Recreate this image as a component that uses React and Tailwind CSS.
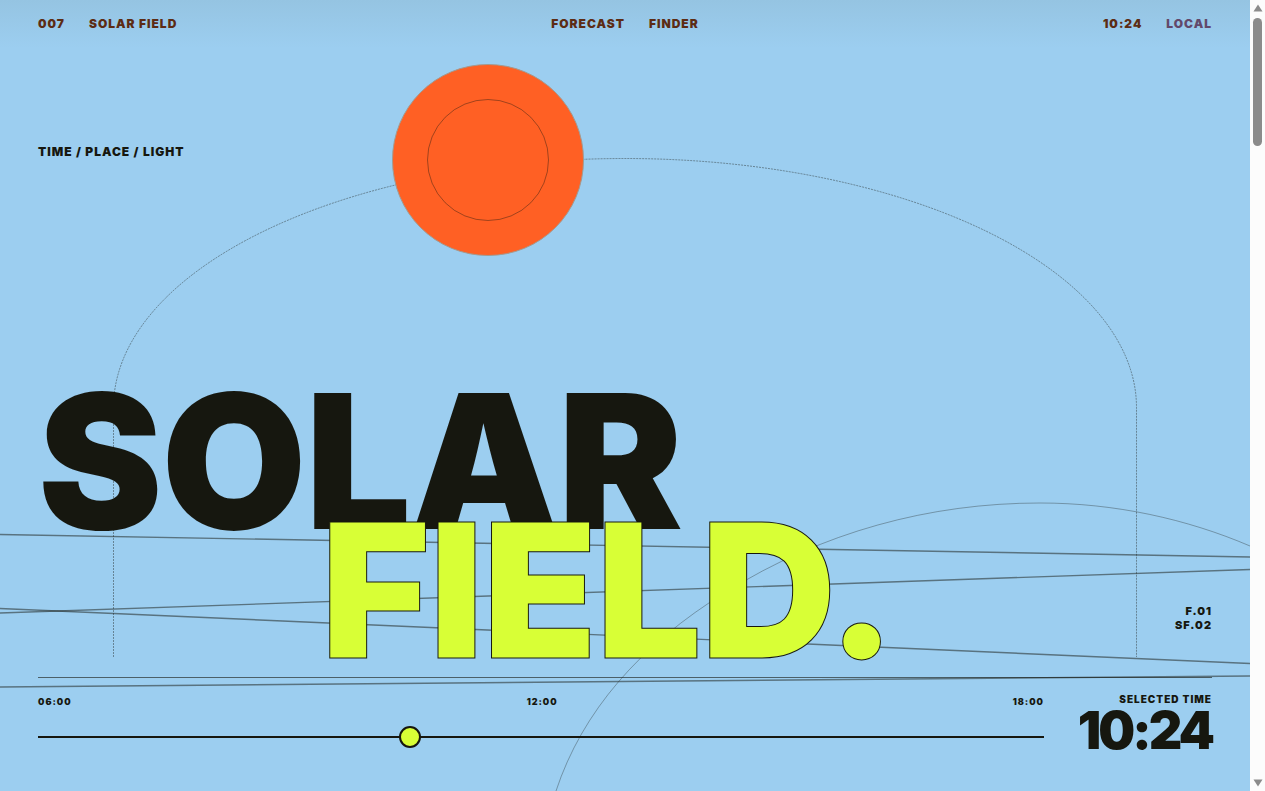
import React, { useState } from 'react';

const HOUR_MARKS = ['06:00', '12:00', '18:00'];

const formatTime = (minutes) => {
  const hours = String(Math.floor(minutes / 60)).padStart(2, '0');
  const rest = String(minutes % 60).padStart(2, '0');
  return `${hours}:${rest}`;
};

function FieldLines() {
  return (
    <svg
      className="absolute inset-0 -z-10 h-full w-full"
      viewBox="0 0 1250 791"
      preserveAspectRatio="none"
      fill="none"
      stroke="#16170f"
      aria-hidden="true"
    >
      {/* day arc */}
      <path
        d="M113.5 657V407.5A511.5 249 0 0 1 1136.5 407.5V657"
        strokeOpacity="0.4"
        strokeDasharray="2 1"
      />
      {/* far hill */}
      <path
        d="M556 791C582 712 640 645 726 592C822 532 930 503 1040 503C1115 503 1187 519 1250 546"
        strokeOpacity="0.32"
      />
      {/* furrows */}
      <g strokeOpacity="0.5" strokeWidth="1.4">
        <path d="M0 534.5L1250 557" />
        <path d="M0 613L1250 569.5" />
        <path d="M0 608.5L1250 663.5" />
        <path d="M0 687L1250 676" />
      </g>
      {/* sun */}
      <circle cx="488" cy="160" r="95.5" fill="#ff6024" stroke="#a39a90" />
      <circle cx="488" cy="160" r="60.5" strokeOpacity="0.4" />
    </svg>
  );
}

function Header({ time }) {
  return (
    <header className="grid h-12 grid-cols-3 items-center bg-linear-to-b from-[#95c4e2] to-[#9ccef0] px-[38px] text-[12px] text-[#5c2c14]">
      <div className="flex gap-6">
        <span>007</span>
        <a href="#top">SOLAR FIELD</a>
      </div>
      <nav className="flex justify-center gap-6">
        <a href="#forecast">FORECAST</a>
        <a href="#finder">FINDER</a>
      </nav>
      <div className="flex justify-end gap-6">
        <span>{time}</span>
        <span className="text-[#62486a]">LOCAL</span>
      </div>
    </header>
  );
}

function TimeControl({ minutes, onChange }) {
  return (
    <div className="mx-[38px] mt-[22px] flex h-[114px] gap-8 border-t border-[#16170f]/60">
      <div className="flex-1 pt-4">
        <div className="flex justify-between text-[9px] leading-4">
          {HOUR_MARKS.map((mark) => (
            <span key={mark}>{mark}</span>
          ))}
        </div>
        <input
          type="range"
          min="360"
          max="1080"
          value={minutes}
          onChange={(e) => onChange(Number(e.target.value))}
          aria-label="Time of day"
          className="mt-4 block h-[22px] w-full cursor-pointer appearance-none bg-transparent [&::-webkit-slider-runnable-track]:h-[2px] [&::-webkit-slider-runnable-track]:bg-[#16170f] [&::-webkit-slider-thumb]:-mt-[10px] [&::-webkit-slider-thumb]:size-[22px] [&::-webkit-slider-thumb]:appearance-none [&::-webkit-slider-thumb]:rounded-full [&::-webkit-slider-thumb]:border-2 [&::-webkit-slider-thumb]:border-solid [&::-webkit-slider-thumb]:border-[#16170f] [&::-webkit-slider-thumb]:bg-[#d8ff36]"
        />
      </div>
      <div className="flex w-[136px] flex-col items-end pt-[13px]">
        <span className="text-[10px] leading-4">SELECTED TIME</span>
        <output className="text-[52px] leading-[48px] tracking-[-3px]">{formatTime(minutes)}</output>
      </div>
    </div>
  );
}

function Scrollbar() {
  return (
    <div className="flex w-[15px] flex-col items-center justify-between bg-[#fcfcfc] py-1" aria-hidden="true">
      <div className="flex flex-col items-center gap-[6px]">
        <svg width="10" height="8" viewBox="0 0 10 8" fill="#8b8b8b">
          <path d="M5 0.5L9.5 7.5H0.5Z" />
        </svg>
        <div className="h-32 w-[9px] rounded-full bg-[#8b8b8b]" />
      </div>
      <svg width="10" height="8" viewBox="0 0 10 8" fill="#8b8b8b">
        <path d="M0.5 0.5H9.5L5 7.5Z" />
      </svg>
    </div>
  );
}

export default function App() {
  const [minutes, setMinutes] = useState(624);

  return (
    <div className="flex min-h-screen font-['Arial_Black',Inter,sans-serif] font-black tracking-[1px] text-[#16170f]">
      <main id="top" className="relative isolate flex min-w-0 flex-1 flex-col overflow-hidden bg-[#9ccef0]">
        <FieldLines />
        <Header time={formatTime(minutes)} />
        <p className="mt-24 px-[38px] text-[12px] leading-4">TIME / PLACE / LIGHT</p>
        <div className="mt-auto flex items-end justify-between px-[38px]">
          <h1 className="text-[187px] leading-[129px] tracking-[-1px]">
            <span className="block">SOLAR</span>
            <span className="relative ml-[283px] block text-[#d8ff36] [-webkit-text-stroke:1px_#16170f]">
              FIELD.
            </span>
          </h1>
          <p className="pb-[23px] text-right text-[11px] leading-[14px]">
            F.01
            <br />
            SF.02
          </p>
        </div>
        <TimeControl minutes={minutes} onChange={setMinutes} />
      </main>
      <Scrollbar />
    </div>
  );
}
